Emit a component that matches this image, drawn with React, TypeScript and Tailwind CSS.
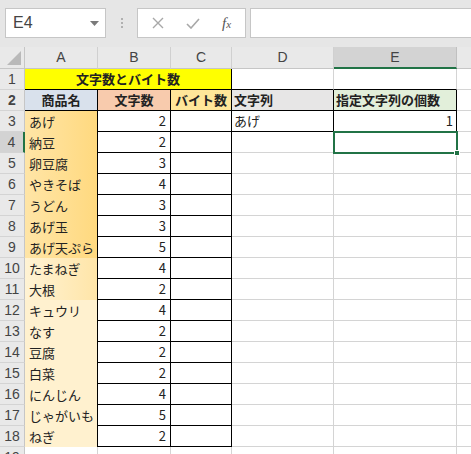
import React from 'react'

const font = { fontFamily: '"Noto Sans CJK JP", "Noto Sans", sans-serif' }

const items: [string, number][] = [
  ['あげ', 2],
  ['納豆', 2],
  ['卵豆腐', 3],
  ['やきそば', 4],
  ['うどん', 3],
  ['あげ玉', 3],
  ['あげ天ぷら', 5],
  ['たまねぎ', 4],
  ['大根', 2],
  ['キュウリ', 4],
  ['なす', 2],
  ['豆腐', 2],
  ['白菜', 2],
  ['にんじん', 4],
  ['じゃがいも', 5],
  ['ねぎ', 2],
]

function fillA(row: number): string {
  if (row <= 9) return 'bg-gradient-to-r from-[#ffe5a6] to-[#ffd97f]'
  if (row <= 11) return 'bg-gradient-to-r from-[#fff3d4] to-[#ffe5a8]'
  return 'bg-[#fff1cf]'
}

function RowHead({ n, active }: { n: number; active?: boolean }) {
  return (
    <div
      className={
        'w-[25px] shrink-0 flex items-center justify-center text-[14px] text-[#444] border-b border-[#d4d4d4] ' +
        (active ? 'bg-[#d3d3d3] border-r-2 border-r-[#217346]' : 'bg-[#e9e9e9] border-r border-r-[#c6c6c6]')
      }
      style={{ fontFamily: '"Liberation Sans", sans-serif' }}
    >
      {n}
    </div>
  )
}

function Toolbar() {
  return (
    <div className="h-[47px] bg-[#e6e6e6] flex items-start pt-[8px] pl-[5px]">
      <div className="w-[101px] h-[30px] bg-white border border-[#c6c6c6] flex items-center justify-between pl-[7px] pr-[6px]">
        <span className="text-[16px] text-[#444] font-light" style={{ fontFamily: '"Liberation Sans", sans-serif' }}>E4</span>
        <svg width="9" height="5" viewBox="0 0 9 5">
          <path d="M0 0 L9 0 L4.5 5 Z" fill="#7a7a7a" />
        </svg>
      </div>
      <div className="w-[31px] h-[30px] flex flex-col items-center justify-center gap-[2px]">
        <span className="w-[2px] h-[2px] bg-[#b0b0b0]" />
        <span className="w-[2px] h-[2px] bg-[#b0b0b0]" />
        <span className="w-[2px] h-[2px] bg-[#b0b0b0]" />
      </div>
      <div className="w-[109px] h-[30px] bg-white border border-[#c6c6c6] flex items-center">
        <div className="w-[40px] flex justify-center">
          <svg width="12" height="12" viewBox="0 0 12 12">
            <path d="M1 1 L11 11 M11 1 L1 11" stroke="#a8a8a8" strokeWidth="1.4" fill="none" />
          </svg>
        </div>
        <div className="w-[30px] flex justify-center">
          <svg width="14" height="11" viewBox="0 0 14 11">
            <path d="M1 6 L5 10 L13 1" stroke="#a8a8a8" strokeWidth="1.6" fill="none" />
          </svg>
        </div>
        <div className="flex-1 flex justify-center">
          <span className="italic text-[15px] text-[#555]" style={{ fontFamily: '"Liberation Serif", serif' }}>
            f<span className="text-[11px]">x</span>
          </span>
        </div>
      </div>
      <div className="ml-[4px] flex-1 h-[30px] bg-white border border-[#c6c6c6] border-r-0" />
    </div>
  )
}

function ColHeader() {
  const cols: [string, string][] = [
    ['A', 'w-[73px]'],
    ['B', 'w-[73px]'],
    ['C', 'w-[61px]'],
    ['D', 'w-[102px]'],
  ]
  return (
    <div className="h-[22px] flex bg-[#e9e9e9] text-[14px] text-[#444]" style={{ fontFamily: '"Liberation Sans", sans-serif' }}>
      <div className="w-[25px] shrink-0 border-r border-b border-[#c6c6c6] flex items-end justify-end pr-[3px] pb-[3px]">
        <svg width="14" height="14" viewBox="0 0 14 14">
          <path d="M14 0 L14 14 L0 14 Z" fill="#b9b9b9" />
        </svg>
      </div>
      {cols.map(([c, w]) => (
        <div key={c} className={w + ' shrink-0 border-r border-[#d0d0d0] border-b border-b-[#c6c6c6] flex items-center justify-center'}>
          {c}
        </div>
      ))}
      <div className="w-[123px] shrink-0 bg-[#d3d3d3] border-r border-[#c0c0c0] border-b-2 border-b-[#217346] flex items-center justify-center">
        E
      </div>
      <div className="flex-1 border-b border-[#c6c6c6]" />
    </div>
  )
}

export default function App() {
  return (
    <div className="w-[471px] h-[454px] overflow-hidden bg-white text-[#222]" style={font}>
      <Toolbar />
      <ColHeader />
      <div className="relative text-[13px] whitespace-nowrap">
        {/* row 1 */}
        <div className="h-[21px] flex">
          <RowHead n={1} />
          <div className="w-[207px] shrink-0 bg-[#ffff00] border-r border-b border-black flex items-center justify-center font-bold">
            文字数とバイト数
          </div>
          <div className="w-[102px] shrink-0 border-r border-[#d4d4d4] border-b border-b-black" />
          <div className="w-[123px] shrink-0 border-r border-[#d4d4d4] border-b border-b-black" />
          <div className="flex-1 border-b border-[#d4d4d4]" />
        </div>
        {/* row 2 */}
        <div className="h-[21px] flex font-bold">
          <RowHead n={2} />
          <div className="w-[73px] shrink-0 bg-[#d9e1ec] border-r border-b border-black flex items-center justify-center">商品名</div>
          <div className="w-[73px] shrink-0 bg-[#f8cbad] border-r border-b border-black flex items-center justify-center">文字数</div>
          <div className="w-[61px] shrink-0 bg-[#ffe699] border-r border-b border-black flex items-center justify-center">バイト数</div>
          <div className="w-[102px] shrink-0 bg-[#e7e6e6] border-r border-b border-black flex items-center pl-[2px]">文字列</div>
          <div className="w-[123px] shrink-0 bg-[#e2efda] border-r border-b border-black flex items-center pl-[2px]">指定文字列の個数</div>
          <div className="flex-1 border-b border-[#d4d4d4]" />
        </div>
        {items.map(([name, count], i) => {
          const row = i + 3
          return (
            <div key={row} className="h-[21px] flex">
              <RowHead n={row} active={row === 4} />
              <div className={'w-[73px] shrink-0 border-r border-r-black flex items-center pl-[4px] ' + fillA(row)}>{name}</div>
              <div className="w-[73px] shrink-0 border-r border-b border-black flex items-center justify-end pr-[4px]">{count}</div>
              <div className="w-[61px] shrink-0 border-r border-b border-black" />
              {row === 3 ? (
                <>
                  <div className="w-[102px] shrink-0 border-r border-b border-black flex items-center pl-[2px]">あげ</div>
                  <div className="w-[123px] shrink-0 border-r border-b border-black flex items-center justify-end pr-[3px]">1</div>
                </>
              ) : (
                <>
                  <div className="w-[102px] shrink-0 border-r border-b border-[#d4d4d4]" />
                  <div className="w-[123px] shrink-0 border-r border-b border-[#d4d4d4]" />
                </>
              )}
              <div className="flex-1 border-b border-[#d4d4d4]" />
            </div>
          )
        })}
        {/* row 19 */}
        <div className="h-[21px] flex">
          <RowHead n={19} />
          <div className="w-[73px] shrink-0 border-r border-b border-[#d4d4d4]" />
          <div className="w-[73px] shrink-0 border-r border-b border-[#d4d4d4]" />
          <div className="w-[61px] shrink-0 border-r border-b border-[#d4d4d4]" />
          <div className="w-[102px] shrink-0 border-r border-b border-[#d4d4d4]" />
          <div className="w-[123px] shrink-0 border-r border-b border-[#d4d4d4]" />
          <div className="flex-1 border-b border-[#d4d4d4]" />
        </div>
        {/* selection E4 */}
        <div className="absolute left-[333px] top-[62px] w-[125px] h-[23px] border-2 border-[#217346]" />
        <div className="absolute left-[454px] top-[81px] w-[6px] h-[6px] bg-[#217346] border border-white" />
      </div>
    </div>
  )
}
